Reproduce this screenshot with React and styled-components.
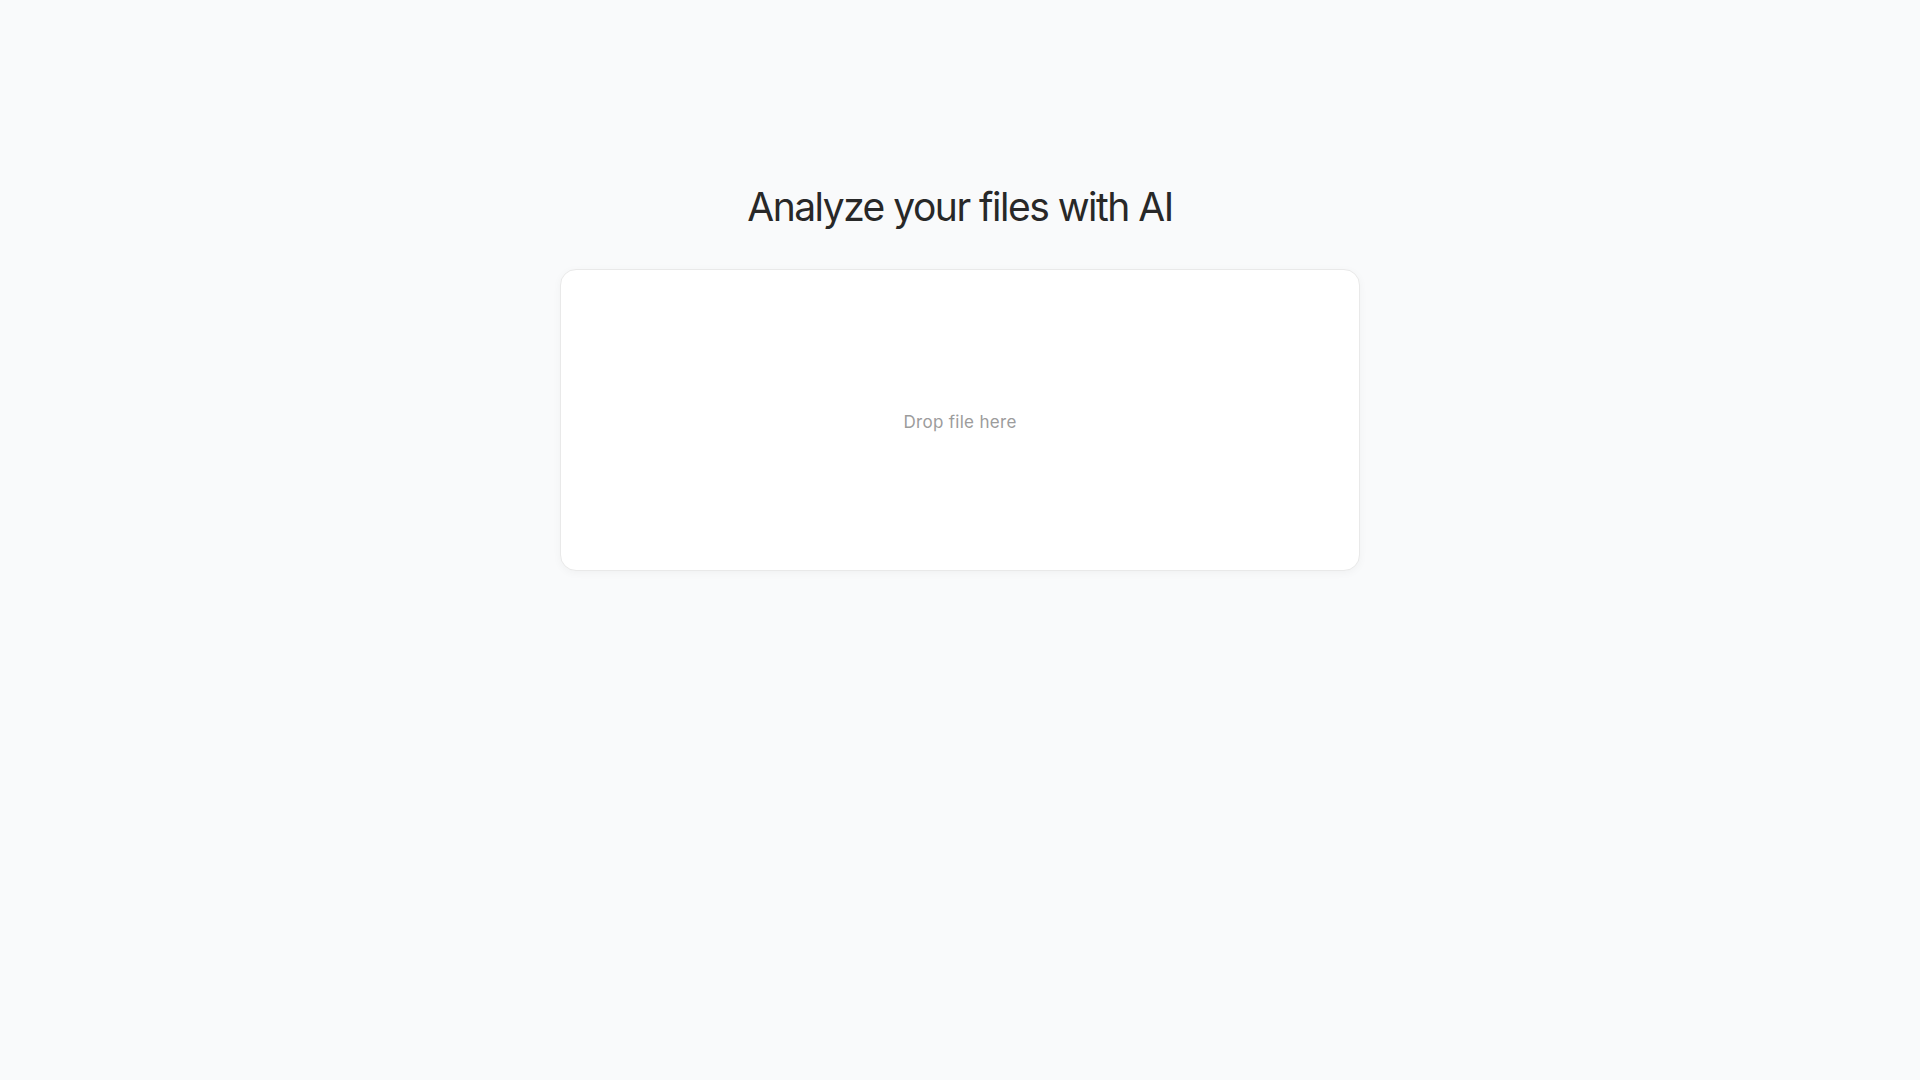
import React from "react";
import styled, { createGlobalStyle } from "styled-components";

const Global = createGlobalStyle`
  html, body { margin: 0; padding: 0; }
  body {
    background: #f9fafb;
    font-family: Inter, "Noto Sans", sans-serif;
    min-height: 100vh;
  }
`;

const Page = styled.main`
  display: flex;
  flex-direction: column;
  align-items: center;
  padding-top: 183px;
  gap: 38px;
`;

const Title = styled.h1`
  margin: 0;
  font-size: 39px;
  font-weight: 400;
  line-height: 48px;
  color: #282828;
  letter-spacing: -1.5px;
`;

const DropZone = styled.div`
  width: 800px;
  height: 302px;
  box-sizing: border-box;
  padding-top: 4px;
  background: #ffffff;
  border: 1px solid #e9e9e9;
  border-radius: 16px;
  box-shadow: 0 2px 8px rgba(0, 0, 0, 0.04);
  display: flex;
  align-items: center;
  justify-content: center;
`;

const Hint = styled.span`
  font-size: 17px;
  line-height: 20px;
  color: #9c9c9c;
  letter-spacing: 0.3px;
`;

export default function App() {
  return (
    <>
      <Global />
      <Page>
        <Title>Analyze your files with AI</Title>
        <DropZone>
          <Hint>Drop file here</Hint>
        </DropZone>
      </Page>
    </>
  );
}
